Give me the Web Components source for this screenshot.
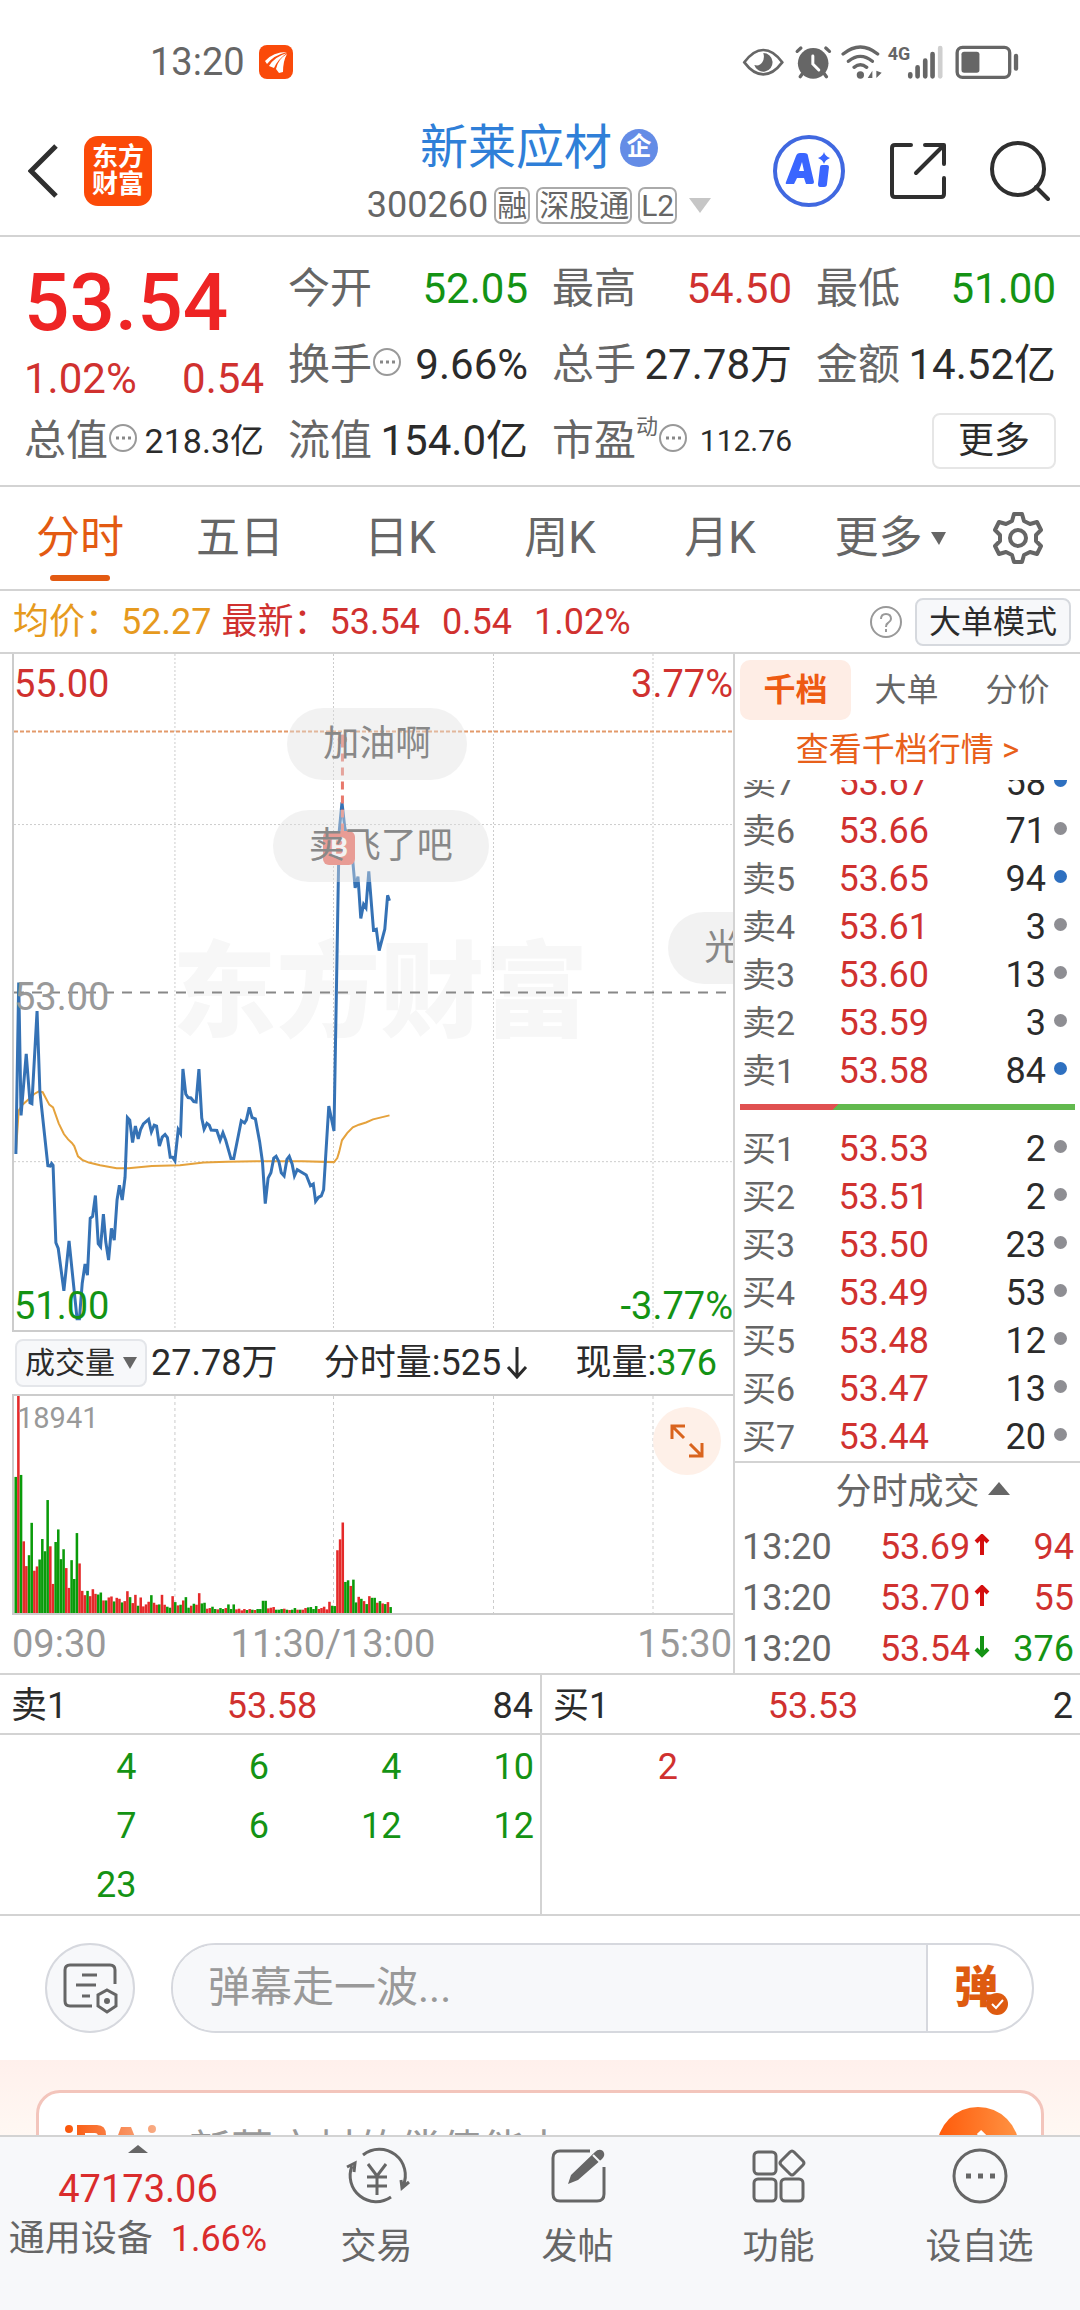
<!DOCTYPE html>
<html lang="zh-CN">
<head>
<meta charset="utf-8">
<meta name="viewport" content="width=device-width, initial-scale=1">
<title>新莱应材 300260</title>
<style>
  body {
    margin: 0;
    background: #fff;
    color: #666;
    font-family: Roboto, "Noto Sans CJK SC", sans-serif;
    font-size: 36px;
    line-height: 48px;
    --up: #d0312f;
    --down: #149314;
    --ink: #2b2b2b;
    --line: #d3d3d3;
    --accent: #e35a12;
  }
</style>
</head>
<body>
<stock-app></stock-app>

<script>
// Shared by every element: one open shadow root, filled from render().
class BaseElement extends HTMLElement {
  constructor() {
    super();
    this.attachShadow({ mode: "open" });
  }

  connectedCallback() {
    this.shadowRoot.innerHTML = `
      <style>
        :host, * { box-sizing: border-box; }
        button, input {
          font: inherit;
          color: inherit;
          background: none;
          border: 0;
          padding: 0;
          margin: 0;
        }
        a { color: inherit; text-decoration: none; }
        svg { display: block; flex: none; }
        table { border-collapse: collapse; width: 100%; }
        td, th { padding: 0; font-weight: 400; text-align: left; }
        .up { color: var(--up); }
        .down { color: var(--down); }
        .ink { color: var(--ink); }
      </style>
      ${this.render()}
    `;
  }
}

class StatusBar extends BaseElement {
  render() {
    return `
      <style>
        :host {
          display: flex;
          align-items: center;
          justify-content: space-between;
          height: 124px;
          padding: 0 60px 0 150px;
          font-size: 38px;
        }
        .time { display: flex; align-items: center; gap: 14px; }
      </style>
      <div class="time">
        <span>13:20</span>
        <svg width="34" height="34" viewBox="0 0 34 34">
          <rect width="34" height="34" rx="8" fill="#fa4a0a"/>
          <path d="M6 16Q14 7 28 7Q15 10 8 19ZM10 21Q15 12 28 8Q19 14 15 23ZM17 24Q19 14 28 9Q24 16 24 27L20 28Z" fill="#fff"/>
        </svg>
      </div>
      <svg width="278" height="36" viewBox="36 40 836 108" fill="none" stroke="#666" stroke-width="8" stroke-linecap="round">
        <path d="M43 95Q70 58 100 58T157 95Q130 131 100 131T43 95Z"/>
        <path d="M100 67a28 28 0 1 1-27 36q16 5 24-8t3-28z" fill="#666" stroke="none"/>
        <circle cx="250" cy="98" r="46" fill="#666" stroke="none"/>
        <path d="M202 62l11-10M299 62l-11-10M217 130l-6 8M284 130l6 8" stroke-width="10"/>
        <path d="M249 76v24l18 18" stroke="#fff" stroke-width="9"/>
        <path d="M340 70q52-42 104 0M356 92q36-30 72 0M373 110q19-15 38 0" stroke-width="10"/>
        <circle cx="392" cy="133" r="11" fill="#666" stroke="none"/>
        <path d="M428 120v22h-14zM440 120v22l16-16z" fill="#666" stroke="none"/>
        <text x="474" y="88" font-size="54" font-weight="700" fill="#666" stroke="none">4G</text>
        <path d="M542 131v6M564 110v27M587 90v47M609 70v67" stroke-width="14"/>
        <path d="M632 52v85" stroke="#cfcfcf" stroke-width="14"/>
        <rect x="683" y="50" width="158" height="90" rx="16" stroke-width="10"/>
        <rect x="696" y="63" width="54" height="63" rx="8" fill="#666" stroke="none"/>
        <path d="M860 76v38" stroke-width="13"/>
      </svg>
    `;
  }
}

class StockHeader extends BaseElement {
  render() {
    return `
      <style>
        :host {
          display: grid;
          grid-template-columns: 1fr auto 1fr;
          align-items: center;
          height: 113px;
          padding: 0 30px 10px 28px;
          border-bottom: 2px solid var(--line);
        }
        .side { display: flex; align-items: center; gap: 26px; padding-bottom: 8px; }
        .tools { justify-content: flex-end; gap: 44px; }
        .brand {
          width: 68px;
          padding: 8px 0;
          border-radius: 14px;
          background: #fb4a08;
          color: #fff;
          font-size: 26px;
          line-height: 27px;
          font-weight: 700;
          text-align: center;
        }
        .middle { display: flex; flex-direction: column; align-items: center; gap: 13px; }
        .name {
          display: flex;
          align-items: center;
          gap: 8px;
          margin: 0;
          color: #2f7fd8;
          font-size: 48px;
          font-weight: 400;
          line-height: 48px;
        }
        .qi {
          width: 38px;
          height: 38px;
          border-radius: 50%;
          background: #648ce6;
          color: #fff;
          font-size: 25px;
          line-height: 36px;
          font-weight: 700;
          text-align: center;
        }
        .code { display: flex; align-items: center; gap: 6px; line-height: 40px; }
        .tag {
          padding: 0 1px;
          border: 2px solid #aaa;
          border-radius: 7px;
          font-size: 30px;
          line-height: 33px;
        }
        .code svg { margin-left: 6px; }
      </style>
      <div class="side">
        <button aria-label="返回">
          <svg width="30" height="54" viewBox="0 0 30 54" fill="none" stroke="#2f2f2f" stroke-width="5"><path d="M28 2L3 27l25 25"/></svg>
        </button>
        <a class="brand" href="#">东方<br>财富</a>
      </div>
      <div class="middle">
        <h1 class="name">新莱应材<span class="qi">企</span></h1>
        <div class="code">
          <span>300260</span><span class="tag">融</span><span class="tag">深股通</span><span class="tag">L2</span>
          <svg width="22" height="15" viewBox="0 0 22 15"><path d="M0 0h22L11 15z" fill="#c6c6c6"/></svg>
        </div>
      </div>
      <div class="side tools">
        <button aria-label="AI">
          <svg width="72" height="72" viewBox="0 0 72 72">
            <circle cx="36" cy="36" r="34" fill="none" stroke="#4068e0" stroke-width="4"/>
            <path d="M13 47L23 21q1-3 4-3h4q4 0 4 3l6 26q0 2-2 2h-6l-2-6h-7l-3 6h-7q-2 0-1-2zM26 36h5l-2-9z" fill="#3a66ff"/>
            <path d="M47 32q0-2 2-2h5q2 0 2 2l-2 17q0 3-3 3h-4q-2 0-2-3zM51 17q1 4 6 6-5 2-6 6-1-4-6-6 5-2 6-6z" fill="#3a66ff"/>
          </svg>
        </button>
        <button aria-label="分享">
          <svg width="57" height="58" viewBox="0 0 57 58" fill="none" stroke="#2f2f2f" stroke-width="4" stroke-linecap="round" stroke-linejoin="round">
            <path d="M22 3H6Q3 3 3 6v46q0 3 3 3h46q3 0 3-3V36M36 3h19v19M54 4L27 31"/>
          </svg>
        </button>
        <button aria-label="搜索">
          <svg width="60" height="60" viewBox="0 0 60 60" fill="none" stroke="#2f2f2f" stroke-width="4" stroke-linecap="round">
            <circle cx="28" cy="28" r="26"/><path d="M46 46l12 12"/>
          </svg>
        </button>
      </div>
    `;
  }
}

class QuotePanel extends BaseElement {
  render() {
    const more = `
      <svg width="30" height="30" viewBox="0 0 30 30">
        <circle cx="15" cy="15" r="13" fill="none" stroke="#999" stroke-width="2"/>
        <path d="M8 15h3M14 15h3M20 15h3" stroke="#888" stroke-width="3"/>
      </svg>`;
    return `
      <style>
        :host {
          display: grid;
          grid-template-columns: repeat(4, 1fr);
          grid-auto-rows: 76px;
          column-gap: 24px;
          padding: 14px 24px 6px;
          border-bottom: 2px solid var(--line);
          font-size: 42px;
        }
        .price {
          grid-row: span 2;
          display: flex;
          flex-direction: column;
          justify-content: space-between;
        }
        .last {
          color: #ee2424;
          font-size: 80px;
          font-weight: 500;
          line-height: 104px;
        }
        .row { display: flex; align-items: center; justify-content: space-between; white-space: nowrap; }
        .label { display: flex; align-items: center; }
        .label svg { margin-bottom: 6px; }
        .cap { font-size: 34px; }
        .ratio { font-size: 30px; }
        sup { align-self: flex-start; font-size: 22px; line-height: 20px; }
        .last-cell { justify-content: flex-end; }
        button {
          width: 124px;
          height: 56px;
          border: 2px solid #e6e6e6;
          border-radius: 8px;
          font-size: 36px;
        }
      </style>
      <div class="price">
        <span class="last">53.54</span>
        <div class="row up"><span>1.02%</span><span>0.54</span></div>
      </div>
      <div class="row"><span>今开</span><span class="down">52.05</span></div>
      <div class="row"><span>最高</span><span class="up">54.50</span></div>
      <div class="row"><span>最低</span><span class="down">51.00</span></div>
      <div class="row"><span class="label">换手${more}</span><span class="ink">9.66%</span></div>
      <div class="row"><span>总手</span><span class="ink">27.78万</span></div>
      <div class="row"><span>金额</span><span class="ink">14.52亿</span></div>
      <div class="row"><span class="label">总值${more}</span><span class="ink cap">218.3亿</span></div>
      <div class="row"><span>流值</span><span class="ink">154.0亿</span></div>
      <div class="row"><span class="label">市盈<sup>动</sup>${more}</span><span class="ink ratio">112.76</span></div>
      <div class="row last-cell"><button class="ink">更多</button></div>
    `;
  }
}

class PeriodTabs extends BaseElement {
  render() {
    const tabs = ["分时", "五日", "日K", "周K", "月K", "更多"];
    return `
      <style>
        :host {
          display: grid;
          grid-template-columns: repeat(5, 160fr) 180fr 76fr;
          height: 104px;
          padding-right: 24px;
          border-bottom: 2px solid var(--line);
          font-size: 44px;
        }
        button {
          position: relative;
          display: flex;
          align-items: center;
          justify-content: center;
          gap: 8px;
        }
        .active { color: var(--accent); }
        .active::after {
          content: "";
          position: absolute;
          bottom: 8px;
          width: 60px;
          height: 6px;
          border-radius: 3px;
          background: var(--accent);
        }
      </style>
      ${tabs
        .map(
          (t, i) => `
        <button class="${i === 0 ? "active" : ""}">${t}${
            t === "更多"
              ? `<svg width="15" height="13" viewBox="0 0 15 13"><path d="M0 0h15L8 13z" fill="#666"/></svg>`
              : ""
          }</button>`
        )
        .join("")}
      <button aria-label="设置">
        <svg width="54" height="54" viewBox="0 0 54 54" fill="none" stroke="#666" stroke-width="4" stroke-linejoin="round">
          <path d="M23 3h8l2 7 6 3 7-2 4 8-5 5v6l5 5-4 8-7-2-6 3-2 7h-8l-2-7-6-3-7 2-4-8 5-5v-6l-5-5 4-8 7 2 6-3z"/>
          <circle cx="27" cy="27" r="8"/>
        </svg>
      </button>
    `;
  }
}

class PriceSummary extends BaseElement {
  render() {
    return `
      <style>
        :host {
          display: flex;
          align-items: center;
          height: 63px;
          padding: 0 9px 0 13px;
          border-bottom: 2px solid var(--line);
        }
        .avg { color: #e69a1e; margin-right: 10px; }
        .up { display: flex; gap: 22px; }
        .help { margin-left: auto; margin-right: 12px; }
        .mode {
          padding: 0 12px;
          border: 2px solid #d6d9de;
          border-radius: 8px;
          background: #f7f8fa;
          font-size: 32px;
          line-height: 44px;
        }
      </style>
      <span class="avg">均价：52.27</span>
      <span class="up"><span>最新：53.54</span><span>0.54</span><span>1.02%</span></span>
      <button class="help" aria-label="帮助">
        <svg width="34" height="34" viewBox="0 0 34 34" fill="none" stroke="#999" stroke-width="2">
          <circle cx="17" cy="17" r="15"/>
          <path d="M12 14q0-5 5-5t5 5q0 2-3 4-2 1-2 4M17 24v3"/>
        </svg>
      </button>
      <button class="mode ink">大单模式</button>
    `;
  }
}

class TimeChart extends BaseElement {
  render() {
    const price =
      "31,1153 37,768 42,1066 53,928 61,1038 65,1040 76,832 82,1012 99,1179 104,1180 107,1174 110,1178 116,1352 121,1365 133,1460 144,1348 161,1523 166,1523 172,1443 178,1400 183,1425 189,1297 194,1293 200,1246 206,1354 211,1361 217,1288 222,1350 228,1391 234,1320 240,1346 246,1256 251,1223 257,1256 263,1205 268,1071 273,1077 279,1127 285,1090 291,1119 296,1098 302,1085 313,1075 319,1103 325,1088 330,1090 336,1135 342,1115 348,1109 353,1116 359,1160 364,1160 369,1168 376,1098 381,1107 386,962 392,1018 397,1026 403,1027 409,1035 414,1036 420,962 426,1072 431,1097 437,1084 442,1088 446,1099 458,1100 465,1122 471,1105 477,1122 488,1163 494,1163 504,1110 510,1078 517,1083 521,1076 527,1048 533,1071 540,1074 549,1125 555,1170 561,1264 567,1207 573,1195 579,1162 584,1158 590,1170 595,1195 601,1202 607,1165 612,1158 618,1175 623,1202 629,1188 640,1195 648,1200 657,1224 663,1220 668,1259 674,1250 680,1247 685,1233 696,1045 707,1101 718,430 724,363 730,420 735,440 740,470 747,495 752,555 758,530 764,624 770,592 775,600 781,518 791,650 797,648 803,696 815,648 821,572 825,584";
    const average =
      "31,1150 37,1055 45,1042 60,1028 70,1018 80,1012 88,1014 95,1028 102,1042 110,1048 122,1084 133,1108 142,1120 150,1128 155,1135 163,1158 172,1166 186,1172 210,1178 245,1185 270,1185 320,1180 380,1178 430,1172 480,1170 560,1169 640,1169 707,1171 714,1162 718,1148 724,1122 735,1106 747,1093 760,1087 775,1082 790,1075 825,1066";
    return `
      <style>
        :host {
          display: block;
          position: relative;
          height: 678px;
          margin-left: 12px;
          border-left: 2px solid #ccc;
          border-bottom: 2px solid #ccc;
          overflow: hidden;
          font-size: 38px;
        }
        .plot { width: 100%; height: 100%; position: relative; }
        .plot * { vector-effect: non-scaling-stroke; }
        .mark, .label, .pill, .buy { position: absolute; white-space: nowrap; }
        .mark {
          left: 22%;
          top: 280px;
          color: #f7f7f7;
          font-size: 104px;
          font-weight: 900;
          line-height: 120px;
        }
        .left { left: 0; }
        .right { right: 0; }
        .top { top: 6px; }
        .center { top: 319px; color: #999; }
        .bottom { bottom: 0; }
        .pill {
          padding: 0 36px;
          border-radius: 36px;
          background: rgba(225, 225, 225, 0.42);
          color: #888;
          font-size: 36px;
          line-height: 72px;
        }
        .buy {
          left: 43%;
          top: 177px;
          width: 32px;
          border-radius: 6px;
          background: #ee6b60;
          color: #fff;
          font-size: 28px;
          font-weight: 700;
          line-height: 34px;
          text-align: center;
        }
      </style>
      <span class="mark">东方财富</span>
      <svg class="plot" viewBox="27 30 1528 1518" preserveAspectRatio="none" fill="none">
        <path d="M369 30V1548M706 30V1548M1046 30V1548M1385 30V1548M27 413H1555M27 1170H1555" stroke="#ccc" stroke-dasharray="2 2"/>
        <path d="M27 204H1555" stroke="#e39a6b" stroke-width="2" stroke-dasharray="4 2"/>
        <path d="M27 790H1555" stroke="#888" stroke-width="2" stroke-dasharray="10 8"/>
        <polyline points="${average}" stroke="#e5a23c" stroke-width="2"/>
        <polyline points="${price}" stroke="#3572b5" stroke-width="3"/>
        <path d="M725 222V430" stroke="#e8796c" stroke-width="3" stroke-dasharray="8 6"/>
        <ellipse cx="725" cy="222" rx="10" ry="11" fill="#e8796c"/>
      </svg>
      <span class="buy">B</span>
      <span class="label left top up">55.00</span>
      <span class="label right top up">3.77%</span>
      <span class="label left center">53.00</span>
      <span class="label left bottom down">51.00</span>
      <span class="label right bottom down">-3.77%</span>
      <span class="pill" style="left: 38%; top: 54px">加油啊</span>
      <span class="pill" style="left: 36%; top: 156px">卖飞了吧</span>
      <span class="pill" style="left: 91%; top: 258px">光</span>
    `;
  }
}

class VolumeChart extends BaseElement {
  render() {
    // one entry per minute: g = falling, r = rising, then the bar height
    const data =
      "g412 r657 g418 r217 r142 g175 g273 r128 r141 g162 g224 g187 g342 r202 r88 g215 g253 g163 g193 r136 r76 g160 g103 g242 r150 r67 r54 g67 r51 r72 r58 g56 g62 r38 g38 r47 r50 g35 r46 r43 g32 r36 r66 g48 r30 r55 g22 r47 r20 r26 r34 g54 r31 r25 g26 r55 r25 g19 g16 r51 g33 r23 g25 r38 g48 g16 r22 g28 r25 r60 g29 g31 r13 r15 g19 g12 r11 g15 g12 r15 g26 g12 g26 r11 r13 r8 r12 g9 r12 g10 r9 g12 g12 g37 g37 r14 r16 r18 g10 g10 g12 r13 g10 r9 g10 g15 r10 g10 r10 r15 g17 g18 g12 g21 r12 r15 r19 r11 r34 g22 g21 r190 r223 r274 g94 g99 r82 g101 g32 r49 g43 r36 g27 r51 g46 g46 r31 g36 r29 g27 r33 g18";
    const bars = data
      .split(" ")
      .map((d, i) => {
        const h = Number(d.slice(1));
        const x = 28 + i * 5.65;
        return `<rect x="${x.toFixed(1)}" y="${880 - h}" width="5.4" height="${h}" fill="${d[0] === "g" ? "#0a9b0a" : "#e52a2a"}"/>`;
      })
      .join("");
    return `
      <style>
        :host { display: block; color: #999; }
        .bar {
          display: flex;
          align-items: center;
          justify-content: space-between;
          height: 62px;
          padding: 0 16px 0 15px;
        }
        .group { display: flex; align-items: center; gap: 4px; }
        .kind {
          display: flex;
          align-items: center;
          gap: 8px;
          height: 48px;
          padding: 0 8px;
          border: 2px solid #e4e6ea;
          border-radius: 8px;
          background: #f7f8fa;
          font-size: 30px;
        }
        .chart {
          position: relative;
          height: 221px;
          margin-left: 12px;
          border: solid #ccc;
          border-width: 2px 0 2px 2px;
        }
        .plot { width: 100%; height: 100%; }
        .grid { vector-effect: non-scaling-stroke; }
        .max { position: absolute; left: 3px; top: 0; font-size: 29px; line-height: 44px; }
        .expand {
          position: absolute;
          right: 12px;
          top: 11px;
          width: 68px;
          height: 68px;
          border-radius: 50%;
          background: #fef0e8;
        }
        .expand svg { margin: auto; }
        .times {
          display: grid;
          grid-template-columns: 1fr auto 1fr;
          margin: 0 1px 0 12px;
          font-size: 38px;
          line-height: 58px;
          align-items: center;
        }
        .times span:nth-child(2) { margin-right: 78px; }
        .times span:last-child { text-align: right; }
      </style>
      <div class="bar ink">
        <div class="group">
          <button class="kind ink">成交量<svg width="14" height="12" viewBox="0 0 14 12"><path d="M0 0h14L7 12z" fill="#666"/></svg></button>
          <span>27.78万</span>
        </div>
        <div class="group">
          <span>分时量:525</span>
          <svg width="24" height="32" viewBox="0 0 24 32" fill="none" stroke="#2b2b2b" stroke-width="3"><path d="M12 0v29M3 20l9 10 9-10"/></svg>
        </div>
        <span>现量:<span class="down">376</span></span>
      </div>
      <div class="chart">
        <svg class="plot" viewBox="27 223 1528 657" preserveAspectRatio="none">
          <path class="grid" d="M369 223V880M706 223V880M1046 223V880M1385 223V880" stroke="#ccc" stroke-dasharray="3 3"/>
          ${bars}
        </svg>
        <span class="max">18941</span>
        <button class="expand" aria-label="全屏">
          <svg width="34" height="34" viewBox="0 0 34 34" fill="none" stroke="#d9641e" stroke-width="3">
            <path d="M2 15V2h13M3 3l11 11M32 19v13H19M31 31L20 20"/>
          </svg>
        </button>
      </div>
      <div class="times"><span>09:30</span><span>11:30/13:00</span><span>15:30</span></div>
    `;
  }
}

class OrderBook extends BaseElement {
  row(label, price, volume, big) {
    return `
      <tr>
        <th scope="row">${label}</th>
        <td class="up">${price}</td>
        <td class="volume ink">${volume}</td>
        <td><i class="${big ? "big" : ""}"></i></td>
      </tr>`;
  }

  render() {
    const sells = [
      ["卖7", "53.67", 58, true],
      ["卖6", "53.66", 71],
      ["卖5", "53.65", 94, true],
      ["卖4", "53.61", 3],
      ["卖3", "53.60", 13],
      ["卖2", "53.59", 3],
      ["卖1", "53.58", 84, true],
    ];
    const buys = [
      ["买1", "53.53", 2],
      ["买2", "53.51", 2],
      ["买3", "53.50", 23],
      ["买4", "53.49", 53],
      ["买5", "53.48", 12],
      ["买6", "53.47", 13],
      ["买7", "53.44", 20],
    ];
    const trades = [
      ["53.69", "up", 94, "up"],
      ["53.70", "up", 55, "up"],
      ["53.54", "down", 376, "down"],
    ];
    const arrows = { up: "M8 21V2M2 8l6-6 6 6", down: "M8 0v19M2 13l6 6 6-6" };
    return `
      <style>
        :host { display: block; border-left: 2px solid var(--line); }
        .tabs {
          display: grid;
          grid-template-columns: repeat(3, 1fr);
          padding: 6px 7px 0 5px;
          font-size: 32px;
          line-height: 60px;
        }
        .tabs .active {
          background: #feede5;
          border-radius: 10px;
          color: #ee5a12;
          font-weight: 700;
        }
        .link {
          display: block;
          color: #e8601a;
          font-size: 33px;
          line-height: 60px;
          text-align: center;
        }
        /* the sell list is scrolled so that only part of its first row shows */
        .sells {
          display: flex;
          flex-direction: column;
          justify-content: flex-end;
          height: 315px;
          overflow: hidden;
        }
        table { table-layout: fixed; }
        tr { height: 48px; }
        th, .time { padding-left: 7px; }
        .book th { width: 30%; font-size: 34px; }
        .book td:nth-child(2) { width: 30%; }
        .volume { text-align: right; }
        .book td:last-child { width: 34px; }
        i {
          display: block;
          width: 13px;
          height: 13px;
          margin: 0 0 6px 8px;
          border-radius: 50%;
          background: #8e8e93;
        }
        i.big { background: #2e70c0; }
        .ratio {
          height: 6px;
          margin: 9px 5px 15px;
          background: linear-gradient(135deg, #e05050 29%, #62b94e 29%);
        }
        .title {
          display: flex;
          align-items: center;
          justify-content: center;
          gap: 8px;
          width: 100%;
          height: 59px;
          padding-left: 30px;
          border-top: 2px solid var(--line);
        }
        .title svg { margin-bottom: 6px; }
        .trades tr { height: 51px; }
        .trades td { padding-top: 3px; }
        .trades .time { width: 34%; padding-left: 7px; }
        .trades td:last-child { padding-right: 6px; width: 26%; text-align: right; }
        .deal { display: flex; align-items: center; justify-content: flex-end; gap: 4px; }
        .arrow { fill: none; stroke: #d40f0f; stroke-width: 4; margin-bottom: 4px; }
        .arrow.down { stroke: #149314; }
      </style>
      <div class="tabs">
        <button class="active">千档</button><button>大单</button><button>分价</button>
      </div>
      <a class="link" href="#">查看千档行情 &gt;</a>
      <div class="sells"><table class="book">${sells.map((r) => this.row(...r)).join("")}</table></div>
      <div class="ratio"></div>
      <table class="book">${buys.map((r) => this.row(...r)).join("")}</table>
      <button class="title">分时成交<svg width="22" height="13" viewBox="0 0 22 13"><path d="M0 13h22L11 0z" fill="#666"/></svg></button>
      <table class="trades">
        ${trades
          .map(
            ([price, dir, volume, cls]) => `
          <tr>
            <td class="time">13:20</td>
            <td class="up"><span class="deal">${price}<svg class="arrow ${dir}" width="16" height="22" viewBox="0 0 16 22"><path d="${arrows[dir]}"/></svg></span></td>
            <td class="${cls}">${volume}</td>
          </tr>`
          )
          .join("")}
      </table>
    `;
  }
}

class OrderQueue extends BaseElement {
  render() {
    const color = this.getAttribute("color");
    const orders = this.getAttribute("orders").split(",");
    return `
      <style>
        :host { display: block; }
        header {
          display: grid;
          grid-template-columns: 1fr auto 1fr;
          align-items: center;
          height: 60px;
          padding: 4px 7px 0 11px;
          border-bottom: 2px solid var(--line);
        }
        header span:last-child { text-align: right; }
        .orders {
          display: grid;
          grid-template-columns: repeat(4, 1fr);
          grid-auto-rows: 59px;
          align-items: center;
          padding: 2px 6px 0 4px;
          text-align: right;
        }
      </style>
      <header>
        <span class="ink">${this.getAttribute("label")}</span>
        <span class="up">${this.getAttribute("price")}</span>
        <span class="ink">${this.getAttribute("total")}</span>
      </header>
      <div class="orders ${color}">${orders.map((o) => `<span>${o}</span>`).join("")}</div>
    `;
  }
}

class DanmuBar extends BaseElement {
  render() {
    return `
      <style>
        :host {
          display: flex;
          align-items: center;
          gap: 36px;
          height: 144px;
          padding: 0 46px 0 45px;
        }
        .round {
          display: flex;
          align-items: center;
          justify-content: center;
          width: 90px;
          height: 90px;
          flex: none;
          border: 2px solid #d6d8de;
          border-radius: 50%;
          background: #f7f8fa;
        }
        .box {
          display: flex;
          flex: 1;
          height: 90px;
          border: 2px solid #d6d8de;
          border-radius: 45px;
          overflow: hidden;
        }
        input {
          flex: 1;
          min-width: 0;
          padding-left: 35px;
          background: #f7f8fa;
          font-size: 42px;
        }
        input::placeholder { color: #999; opacity: 1; }
        .send {
          position: relative;
          width: 106px;
          padding-right: 8px;
          border-left: 2px solid #d6d8de;
          color: #de5b10;
          font-size: 44px;
          font-weight: 900;
        }
        .send svg { position: absolute; right: 24px; bottom: 16px; }
      </style>
      <button class="round" aria-label="弹幕设置">
        <svg width="56" height="52" viewBox="0 0 56 52" fill="none" stroke="#666" stroke-width="3">
          <path d="M30 44H8q-5 0-5-5V8q0-5 5-5h40q5 0 5 5v14M20 13h15M14 23h20M20 34h8"/>
          <path d="M45 28l9 5v11l-9 6-9-6V33z"/><circle cx="45" cy="39" r="3" fill="#666" stroke="none"/>
        </svg>
      </button>
      <div class="box">
        <input type="text" aria-label="弹幕" placeholder="弹幕走一波...">
        <button class="send">弹<svg width="22" height="22" viewBox="0 0 22 22"><circle cx="11" cy="11" r="11" fill="#de5b10"/><path d="M6 11l4 4 7-8" fill="none" stroke="#fff" stroke-width="2"/></svg></button>
      </div>
    `;
  }
}

class AiStrip extends BaseElement {
  render() {
    return `
      <style>
        /* only the top edge of the card shows above the bottom navigation */
        :host {
          display: block;
          flex: 1 1 75px;
          overflow: hidden;
          padding: 30px 36px 0;
          background: linear-gradient(#fff0ec, #fff8f3);
        }
        .card {
          display: flex;
          align-items: flex-start;
          gap: 32px;
          height: 160px;
          padding: 14px 22px 0 26px;
          border: 3px solid #f3c5bc;
          border-radius: 24px;
          background: #fff;
        }
        .logo { margin-top: 18px; }
        .question { flex: 1; margin-top: 20px; color: #999; font-size: 42px; line-height: 48px; }
      </style>
      <a class="card" href="#">
        <svg class="logo" width="92" height="34" viewBox="0 0 92 34">
          <defs><linearGradient id="g"><stop offset="0" stop-color="#fa5508"/><stop offset="1" stop-color="#f8ac85"/></linearGradient></defs>
          <path d="M0 4a4 4 0 1 1 8 0a4 4 0 1 1-8 0M1 12h7v20H1zM12 0h20q9 0 9 10 0 7-6 9l7 13h-9l-6-11h-6v11h-9zM20 8v6h10q3 0 3-3t-3-3zM56 2h10l12 30h-8l-3-7H56l-3 7h-8zM83 4a4 4 0 1 1 8 0a4 4 0 1 1-8 0M83 12h7v20h-7z" fill="url(#g)" fill-rule="evenodd"/>
        </svg>
        <span class="question">新莱应材的偿债能力</span>
        <svg width="82" height="82" viewBox="0 0 82 82">
          <defs><linearGradient id="c"><stop offset="0" stop-color="#ff5a0a"/><stop offset="1" stop-color="#ff9444"/></linearGradient></defs>
          <circle cx="41" cy="41" r="41" fill="url(#c)"/>
          <path d="M22 41h36M42 25l16 16-16 16" fill="none" stroke="#fff" stroke-width="6"/>
        </svg>
      </a>
    `;
  }
}

class BottomNav extends BaseElement {
  render() {
    const items = [
      [
        "交易",
        `<path d="M16 8a26 26 0 0 1 40 31M44 50a26 26 0 0 1-39-31M0 20l8-4-1 9M62 35l-7 6-1-8M21 17l9 12 9-12M20 30h20M20 39h20M30 29v19"/>`,
      ],
      [
        "发帖",
        `<path d="M42 4H12q-7 0-7 7v36q0 7 7 7h37q7 0 7-7V20"/><path d="M20 37l3-9 24-23q4-4 8-1 3 4-1 8L30 33z" fill="#666" stroke="none"/><path d="M45 8l8 8" stroke="#f7f8fa" stroke-width="2"/>`,
      ],
      [
        "功能",
        `<rect x="5" y="5" width="22" height="22" rx="4"/><rect x="5" y="32" width="22" height="22" rx="4"/><rect x="32" y="32" width="22" height="22" rx="4"/><path d="M41 5q2-2 4 0l9 9q2 2 0 4l-9 9q-2 2-4 0l-9-9q-2-2 0-4z"/>`,
      ],
      [
        "设自选",
        `<circle cx="30" cy="29" r="26"/><path d="M16 29h5M28 29h5M40 29h5" stroke-width="5"/>`,
      ],
    ];
    return `
      <style>
        :host {
          display: grid;
          grid-template-columns: 276fr repeat(4, 201fr);
          height: 176px;
          border-top: 2px solid var(--line);
          background: #f7f8fa;
        }
        a { display: flex; flex-direction: column; align-items: center; white-space: nowrap; }
        .index { padding-top: 8px; }
        .index b { margin-top: 10px; font-weight: 400; font-size: 38px; line-height: 52px; }
        .index .up { color: #da2c2c; }
        .item { gap: 14px; padding-top: 10px; line-height: 56px; }
      </style>
      <a class="index" href="#">
        <svg width="20" height="8" viewBox="0 0 20 8"><path d="M0 8h20L10 0z" fill="#666"/></svg>
        <b class="up">47173.06</b>
        <span>通用设备 &nbsp;<span class="up">1.66%</span></span>
      </a>
      ${items
        .map(
          ([label, icon]) => `
        <a class="item" href="#">
          <svg width="60" height="58" viewBox="0 0 60 58" overflow="visible" fill="none" stroke="#666" stroke-width="3">${icon}</svg>
          <span>${label}</span>
        </a>`
        )
        .join("")}
    `;
  }
}

class StockApp extends BaseElement {
  render() {
    return `
      <style>
        :host { display: flex; flex-direction: column; min-height: 100vh; }
        .market {
          display: grid;
          grid-template-columns: 733fr 347fr;
          border-bottom: 2px solid var(--line);
        }
        .charts { min-width: 0; }
        .queues {
          display: grid;
          grid-template-columns: 1fr 1fr;
          border-bottom: 2px solid var(--line);
        }
        .queues order-queue + order-queue { border-left: 2px solid var(--line); }
      </style>
      <status-bar></status-bar>
      <stock-header></stock-header>
      <quote-panel></quote-panel>
      <period-tabs></period-tabs>
      <price-summary></price-summary>
      <section class="market">
        <div class="charts">
          <time-chart></time-chart>
          <volume-chart></volume-chart>
        </div>
        <order-book></order-book>
      </section>
      <section class="queues">
        <order-queue label="卖1" price="53.58" total="84" color="down" orders="4,6,4,10,7,6,12,12,23"></order-queue>
        <order-queue label="买1" price="53.53" total="2" color="up" orders="2"></order-queue>
      </section>
      <danmu-bar></danmu-bar>
      <ai-strip></ai-strip>
      <bottom-nav></bottom-nav>
    `;
  }
}

customElements.define("status-bar", StatusBar);
customElements.define("stock-header", StockHeader);
customElements.define("quote-panel", QuotePanel);
customElements.define("period-tabs", PeriodTabs);
customElements.define("price-summary", PriceSummary);
customElements.define("time-chart", TimeChart);
customElements.define("volume-chart", VolumeChart);
customElements.define("order-book", OrderBook);
customElements.define("order-queue", OrderQueue);
customElements.define("danmu-bar", DanmuBar);
customElements.define("ai-strip", AiStrip);
customElements.define("bottom-nav", BottomNav);
customElements.define("stock-app", StockApp);
</script>
</body>
</html>
